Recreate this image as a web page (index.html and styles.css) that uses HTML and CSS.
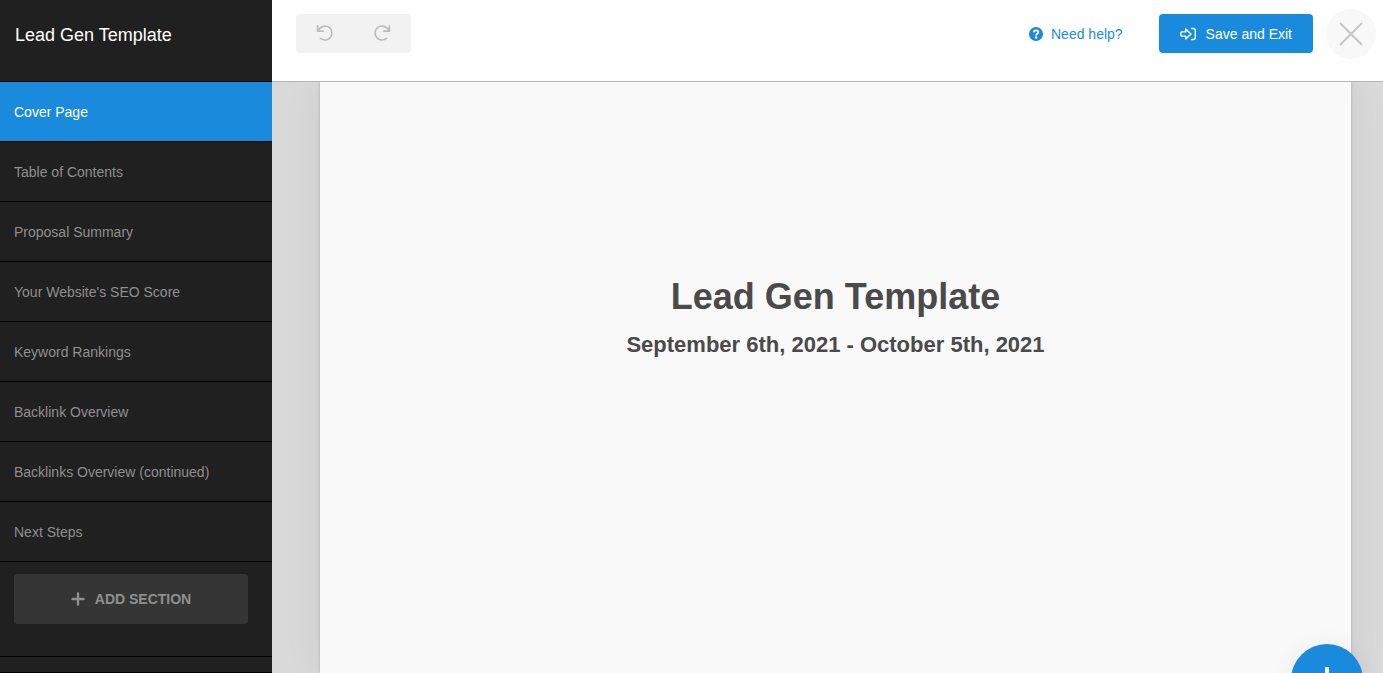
FILE: index.html
```html
<!DOCTYPE html>
<html lang="en">
<head>
<meta charset="utf-8">
<title>Lead Gen Template</title>
<link rel="stylesheet" href="styles.css">
</head>
<body>
<div class="app">
  <aside class="sidebar">
    <div class="sidebar-title">Lead Gen Template</div>
    <nav class="sections">
      <a class="section active" href="#cover">Cover Page</a>
      <a class="section" href="#contents">Table of Contents</a>
      <a class="section" href="#summary">Proposal Summary</a>
      <a class="section" href="#seo">Your Website's SEO Score</a>
      <a class="section" href="#keywords">Keyword Rankings</a>
      <a class="section" href="#backlinks">Backlink Overview</a>
      <a class="section" href="#backlinks-2">Backlinks Overview (continued)</a>
      <a class="section" href="#next">Next Steps</a>
    </nav>
    <div class="sidebar-actions">
      <button class="add-section" type="button">
        <svg width="14" height="14" viewBox="0 0 14 14" fill="none" stroke="currentColor" stroke-width="2.4" stroke-linecap="round"><path d="M7 1.500v11M1.500 7h11"/></svg>
        ADD SECTION
      </button>
    </div>
    <div class="sidebar-footer"></div>
  </aside>
  <div class="main">
    <header class="toolbar">
      <div class="history">
        <button class="history-button" type="button" aria-label="Undo">
          <svg width="19" height="19" viewBox="0 0 19 19" fill="none" stroke="currentColor" stroke-width="1.7" stroke-linecap="round"><path d="M2.600 1.800V7.200H8.200M2.900 6.800L4.600 4.500A7 7 0 1 1 5.500 14.400"/></svg>
        </button>
        <button class="history-button" type="button" aria-label="Redo">
          <svg width="19" height="19" viewBox="0 0 19 19" fill="none" stroke="currentColor" stroke-width="1.7" stroke-linecap="round"><path d="M16.400 1.800V7.200H10.800M16.100 6.800L14.400 4.500A7 7 0 1 0 13.500 14.400"/></svg>
        </button>
      </div>
      <a class="help" href="#help">
        <svg width="14" height="14" viewBox="0 0 14 14"><circle cx="7" cy="7" r="7" fill="currentColor"/><path d="M4.700 5.300C4.900 3.900 5.900 3.300 7.100 3.300c1.300 0 2.200.8 2.200 1.900 0 1.600-2.200 1.500-2.200 3.200" fill="none" stroke="#fff" stroke-width="1.8"/><circle cx="7.1" cy="10.5" r="1.2" fill="#fff"/></svg>
        Need help?
      </a>
      <button class="save" type="button">
        <svg width="17" height="14" viewBox="0 0 17 14" fill="none" stroke="currentColor" stroke-width="1.4" stroke-linejoin="round" stroke-linecap="round"><path d="M1.700 4.900H5.700V2L11 7l-5.300 5V9.100H1.700Q.9 9.100.9 8.300V5.700Q.9 4.900 1.700 4.900ZM11.500 1.500H13.300Q15.300 1.500 15.300 3.500V10.500Q15.300 12.500 13.300 12.500H11.500"/></svg>
        Save and Exit
      </button>
      <button class="close" type="button" aria-label="Close">
        <svg width="24" height="24" viewBox="0 0 24 24" fill="none" stroke="currentColor" stroke-width="2"><path d="M1 1l22 22M23 1L1 23"/></svg>
      </button>
    </header>
    <main class="canvas">
      <article class="paper">
        <h1 class="paper-title">Lead Gen Template</h1>
        <h2 class="paper-dates">September 6th, 2021 - October 5th, 2021</h2>
      </article>
    </main>
  </div>
  <button class="fab" type="button" aria-label="Add">
    <svg width="26" height="26" viewBox="0 0 26 26" fill="none" stroke="currentColor" stroke-width="4"><path d="M13 0v26M0 13h26"/></svg>
  </button>
</div>
</body>
</html>
```
FILE: styles.css
```css
* {
  box-sizing: border-box;
}

body {
  margin: 0;
  font-family: "Liberation Sans", Arial, sans-serif;
  font-size: 14px;
  line-height: 20px;
}

button {
  border: 0;
  padding: 0;
  font: inherit;
  cursor: pointer;
}

a {
  text-decoration: none;
}

svg {
  display: block;
  flex: none;
}

.app {
  position: relative;
  display: flex;
  height: 100vh;
  overflow: hidden;
}

.sidebar {
  display: flex;
  flex: 0 0 272px;
  flex-direction: column;
  overflow: hidden;
  background: #202020;
}

.sidebar-title {
  padding: 23px 15px 34px;
  border-bottom: 1px solid #000;
  color: #fff;
  font-size: 18px;
  line-height: 24px;
}

.sections {
  display: flex;
  flex-direction: column;
}

.section {
  padding: 20px 14px 19px;
  border-bottom: 1px solid #000;
  color: #8f8f8f;
}

.section.active {
  background: #1a8bdc;
  color: #fff;
}

.sidebar-actions {
  padding: 12px 24px 32px 14px;
  border-bottom: 1px solid #000;
}

.add-section {
  display: flex;
  align-items: center;
  justify-content: center;
  gap: 10px;
  width: 100%;
  height: 50px;
  border-radius: 4px;
  background: #353535;
  color: #8f8f8f;
  font-weight: bold;
}

.sidebar-footer {
  flex: 1;
  border-bottom: 1px solid #000;
}

.main {
  display: flex;
  flex: 1;
  flex-direction: column;
  min-width: 0;
}

.toolbar {
  display: flex;
  align-items: flex-start;
  padding: 9px 7px 22px 24px;
  border-bottom: 1px solid #b5b5b5;
  background: #fff;
}

.history {
  display: flex;
  gap: 1px;
  margin: 5px auto 0 0;
  border-radius: 4px;
  background: #f2f2f2;
  color: #bcbcbc;
}

.history-button {
  display: flex;
  align-items: center;
  justify-content: center;
  width: 57px;
  height: 39px;
  background: none;
  color: inherit;
}

.help {
  display: flex;
  align-items: center;
  gap: 8px;
  margin: 15px 36px 0 0;
  color: #1a8bdc;
}

.save {
  display: flex;
  align-items: center;
  gap: 9px;
  height: 39px;
  margin: 5px 13px 0 0;
  padding: 0 21px;
  border-radius: 4px;
  background: #1a8bdc;
  color: #fff;
}

.close {
  display: flex;
  align-items: center;
  justify-content: center;
  width: 50px;
  height: 50px;
  border-radius: 50%;
  background: #f8f8f8;
  color: #c6c6c6;
}

.canvas {
  display: flex;
  flex: 1;
  padding: 0 32px 0 48px;
  overflow: hidden;
  background: #d9d9d9;
}

.paper {
  flex: 1;
  padding: 191px 24px 0;
  background: #f9f9f9;
  box-shadow: 0 0 3px rgba(0, 0, 0, 0.2), 0 0 40px rgba(0, 0, 0, 0.06);
  color: #4a4a4a;
  text-align: center;
}

.paper-title {
  margin: 0;
  font-size: 36px;
  line-height: 48px;
}

.paper-dates {
  margin: 10px 0 0;
  font-size: 22px;
  line-height: 28px;
}

.fab {
  position: absolute;
  right: 20px;
  bottom: -43px;
  display: flex;
  align-items: center;
  justify-content: center;
  width: 72px;
  height: 72px;
  border-radius: 50%;
  background: #1a8bdc;
  box-shadow: 0 4px 24px rgba(0, 0, 0, 0.08);
  color: #fff;
}
```
